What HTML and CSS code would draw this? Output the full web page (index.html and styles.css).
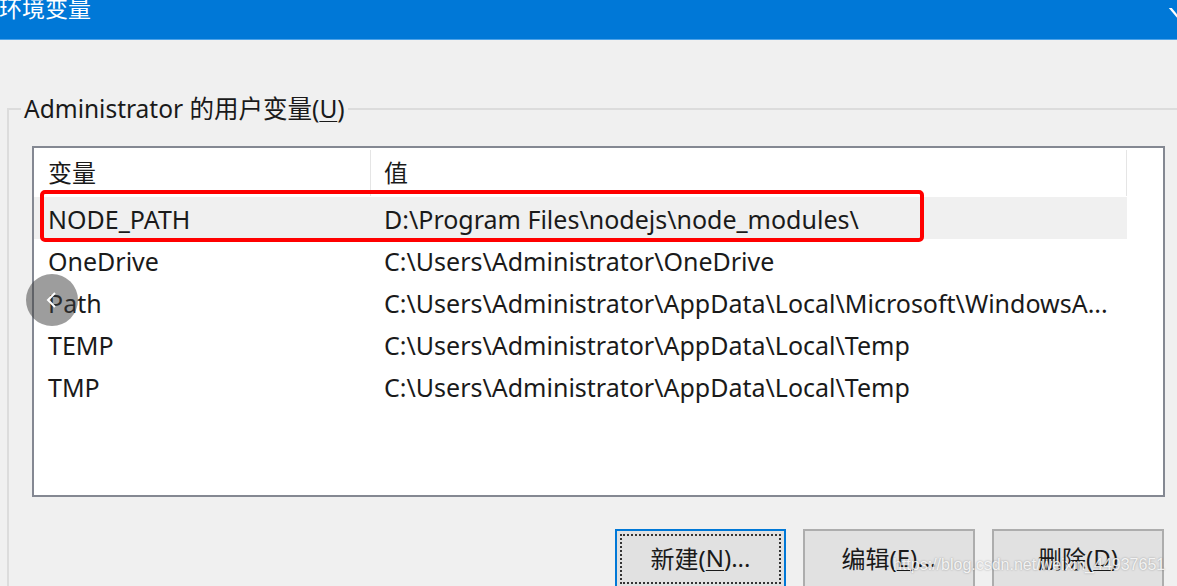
FILE: index.html
```html
<!DOCTYPE html>
<html lang="zh-CN">
<head>
<meta charset="utf-8">
<title>环境变量</title>
<link rel="stylesheet" href="styles.css">
</head>
<body>
<div class="window">
  <div class="titlebar">
    <span class="title">环境变量</span>
    <span class="close-frag"></span>
  </div>
  <div class="main">
    <div class="group">
      <div class="group-label">Administrator 的用户变量(<u>U</u>)</div>
      <div class="listbox">
        <div class="list-header">
          <div class="hcell col1">变量</div>
          <div class="hcell col2">值</div>
        </div>
        <div class="row hover">
          <div class="cell col1">NODE_PATH</div>
          <div class="cell col2">D:\Program Files\nodejs\node_modules\</div>
        </div>
        <div class="row">
          <div class="cell col1">OneDrive</div>
          <div class="cell col2">C:\Users\Administrator\OneDrive</div>
        </div>
        <div class="row">
          <div class="cell col1">Path</div>
          <div class="cell col2">C:\Users\Administrator\AppData\Local\Microsoft\WindowsA...</div>
        </div>
        <div class="row">
          <div class="cell col1">TEMP</div>
          <div class="cell col2">C:\Users\Administrator\AppData\Local\Temp</div>
        </div>
        <div class="row">
          <div class="cell col1">TMP</div>
          <div class="cell col2">C:\Users\Administrator\AppData\Local\Temp</div>
        </div>
        <div class="highlight-box"></div>
      </div>
      <div class="buttons">
        <div class="btn focused"><span class="focus-ring">新建(<u>N</u>)...</span></div>
        <div class="btn"><span class="focus-ring plain">编辑(<u>E</u>)...</span></div>
        <div class="btn"><span class="focus-ring plain">删除(<u>D</u>)</span></div>
      </div>
    </div>
  </div>
  <div class="nav-circle">
    <svg width="52" height="52" viewBox="0 0 52 52"><polyline points="29,19 22,26 29,33" fill="none" stroke="#fff" stroke-width="2"/></svg>
  </div>
  <div class="watermark">https://blog.csdn.net/weixin_44937651</div>
</div>
</body>
</html>
```

FILE: styles.css
```css
html, body {
  margin: 0;
  padding: 0;
}
body {
  width: 1177px;
  height: 586px;
  overflow: hidden;
  background: #f0f0f0;
  font-family: "Noto Sans", "Noto Sans CJK SC", sans-serif;
  color: #000;
}
.window {
  position: relative;
  width: 1177px;
  height: 586px;
  overflow: hidden;
}
.titlebar {
  height: 39px;
  background: #0078d7;
  border-bottom: 1px solid #4ea3e8;
  display: flex;
  align-items: flex-start;
  justify-content: space-between;
}
.title {
  color: #fff;
  font-size: 23px;
  line-height: 23px;
  margin-top: -4px;
  margin-left: -1px;
  font-family: "Noto Sans CJK SC", sans-serif;
}
.close-frag {
  width: 3px;
  height: 10px;
  margin-top: 8px;
  margin-right: 1px;
  background: #fff;
  transform: skewX(40deg);
}
.main {
  padding-left: 7px;
}
.group {
  position: relative;
  margin-top: 68px;
  border-top: 2px solid #dcdcdc;
  border-left: 2px solid #dcdcdc;
  padding: 36px 0 0 23px;
}
.group-label {
  position: absolute;
  left: 12px;
  top: -16px;
  padding: 0 3px;
  background: #f0f0f0;
  font-size: 24.5px;
  line-height: 30px;
  color: #1a1a1a;
  white-space: nowrap;
}
.group-label u {
  text-decoration-thickness: 1px;
  text-underline-offset: 3px;
}
.listbox {
  position: relative;
  box-sizing: border-box;
  width: 1133px;
  height: 351px;
  border: 2px solid #848892;
  background: #fff;
}
.list-header {
  display: flex;
  height: 49px;
  width: 1093px;
}
.hcell {
  box-sizing: border-box;
  display: flex;
  align-items: center;
  font-size: 24px;
  color: #1a1a1a;
  border-right: 1px solid #e5e5e5;
  margin: 2px 0 1px;
  padding-bottom: 4px;
}
.col1 {
  width: 337px;
  padding-left: 14px;
  flex: none;
  box-sizing: border-box;
}
.col2 {
  width: 756px;
  padding-left: 13px;
  flex: none;
  box-sizing: border-box;
}
.row {
  display: flex;
  height: 42px;
  width: 1093px;
}
.row.hover {
  background: #f0f0f0;
}
.cell {
  display: flex;
  align-items: center;
  font-size: 25px;
  white-space: nowrap;
  overflow: hidden;
  color: #1a1a1a;
  padding-top: 2px;
}
.highlight-box {
  position: absolute;
  left: 6px;
  top: 42px;
  width: 884px;
  height: 52px;
  box-sizing: border-box;
  border: 4px solid #ff0000;
  border-radius: 5px;
}
.buttons {
  display: flex;
  justify-content: flex-end;
  gap: 17px;
  width: 1132px;
  margin-top: 32px;
}
.btn {
  box-sizing: border-box;
  width: 172px;
  height: 62px;
  background: #e1e1e1;
  border: 2px solid #adadad;
  padding: 3px;
}
.btn.focused {
  width: 171px;
  border-color: #0078d7;
}
.focus-ring {
  display: flex;
  align-items: center;
  justify-content: center;
  box-sizing: border-box;
  height: 50px;
  border: 2px dotted #333;
  font-size: 24px;
  color: #1a1a1a;
  padding-bottom: 4px;
  white-space: nowrap;
}
.focus-ring.plain {
  border-color: transparent;
}
.focus-ring u {
  text-decoration-thickness: 1px;
  text-underline-offset: 3px;
}
.nav-circle {
  position: absolute;
  left: 26px;
  top: 274px;
  width: 52px;
  height: 52px;
  border-radius: 50%;
  background: rgba(60, 60, 60, 0.5);
}
.nav-circle svg {
  display: block;
}
.watermark {
  position: absolute;
  left: 893px;
  top: 555px;
  font-family: "Liberation Sans", Arial, sans-serif;
  font-size: 16px;
  line-height: 20px;
  color: rgba(255, 255, 255, 0.85);
  text-shadow: 0 0 2px rgba(0, 0, 0, 0.35);
  white-space: nowrap;
}
```
